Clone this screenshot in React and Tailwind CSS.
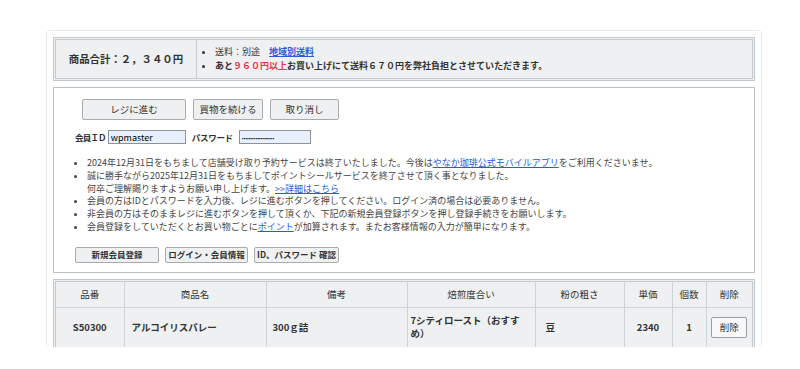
import React from 'react';

const font = { fontFamily: '"Noto Sans CJK JP", "Noto Sans", sans-serif' };

function Btn({ children, className = '' }) {
  return (
    <button
      type="button"
      className={`flex items-center justify-center border border-[#a7abad] bg-[#eef0f1] rounded-[2px] text-[#333] ${className}`}
    >
      {children}
    </button>
  );
}

export default function App() {
  return (
    <div className="w-[800px] h-[369px] bg-white overflow-hidden text-[#333]" style={font}>
      <div className="h-[347px] overflow-hidden pt-[30px] pl-[46px]">
        <div className="w-[716px] h-[340px] border border-[#e9ebec] rounded-[4px] px-[6px] pt-[6px]">
          {/* 合計 */}
          <div className="h-[44px] border-[3px] border-double border-[#c3cacd] bg-[#eef0f1] flex">
            <div className="w-[141px] border-r border-[#c8cfd2] flex items-center justify-center font-bold text-[10.4px]">
              商品合計：２，３４０円
            </div>
            <ul className="flex-1 flex flex-col justify-center pl-[18px] text-[9px] leading-[14px] list-disc">
              <li>
                送料：別途　<a className="text-[#2a5bd7] underline font-bold">地域別送料</a>
              </li>
              <li className="font-bold">
                あと<span className="text-[#f0304a]">９６０円以上</span>お買い上げにて送料６７０円を弊社負担とさせていただきます。
              </li>
            </ul>
          </div>

          {/* ログイン */}
          <div className="mt-[6px] h-[186px] border border-[#b9c0c3] pl-[21px] pt-[11px]">
            <div className="flex gap-[7px] pl-[7px]">
              <Btn className="w-[104px] h-[21px] text-[9.5px]">レジに進む</Btn>
              <Btn className="w-[70px] h-[21px] text-[9.5px]">買物を続ける</Btn>
              <Btn className="w-[69px] h-[21px] text-[9.5px]">取り消し</Btn>
            </div>
            <div className="mt-[10px] flex items-center text-[8.5px] font-bold">
              <span className="tracking-[-0.8px]">会員ＩＤ</span>
              <input
                readOnly
                value="wpmaster"
                className="ml-[2px] w-[78px] h-[14px] bg-[#e8f0fe] border border-[#8d9296] px-[2px] text-[9px] font-normal text-black outline-none"
              />
              <span className="ml-[6px] tracking-[-0.3px]">パスワード</span>
              <input
                readOnly
                type="password"
                value="wpmaster12345678901"
                className="ml-[6px] w-[72px] h-[14px] bg-[#e8f0fe] border border-[#8d9296] px-[2px] text-[5px] font-normal text-black outline-none"
              />
            </div>
            <ul className="mt-[13px] list-disc pl-[12px] text-[9px] leading-[12.8px] text-[#444]">
              <li>
                2024年12月31日をもちまして店舗受け取り予約サービスは終了いたしました。今後は
                <a className="text-[#2a5bd7] underline">やなか珈琲公式モバイルアプリ</a>をご利用くださいませ。
              </li>
              <li>
                誠に勝手ながら2025年12月31日をもちましてポイントシールサービスを終了させて頂く事となりました。
                <br />
                何卒ご理解賜りますようお願い申し上げます。<a className="text-[#2a5bd7] underline">&gt;&gt;詳細はこちら</a>
              </li>
              <li>会員の方はIDとパスワードを入力後、レジに進むボタンを押してください。ログイン済の場合は必要ありません。</li>
              <li>非会員の方はそのままレジに進むボタンを押して頂くか、下記の新規会員登録ボタンを押し登録手続きをお願いします。</li>
              <li>
                会員登録をしていただくとお買い物ごとに<a className="text-[#2a5bd7] underline">ポイント</a>が加算されます。またお客様情報の入力が簡単になります。
              </li>
            </ul>
            <div className="mt-[13px] flex gap-[6px]">
              <Btn className="w-[84px] h-[16px] text-[8.5px] font-bold">新規会員登録</Btn>
              <Btn className="w-[83px] h-[16px] text-[8.5px] font-bold">ログイン・会員情報</Btn>
              <Btn className="w-[85px] h-[16px] text-[8.5px] font-bold">ID、パスワード 確認</Btn>
            </div>
          </div>

          {/* カート */}
          <div className="mt-[6px] border-[3px] border-double border-[#c3cacd] bg-[#eef0f1]">
            <table className="w-full table-fixed border-collapse text-[9.5px]">
              <colgroup>
                <col className="w-[68px]" />
                <col className="w-[142px]" />
                <col className="w-[141px]" />
                <col className="w-[128px]" />
                <col className="w-[89px]" />
                <col className="w-[48px]" />
                <col className="w-[34px]" />
                <col />
              </colgroup>
              <thead>
                <tr className="h-[25px] text-center">
                  {['品番', '商品名', '備考', '焙煎度合い', '粉の粗さ', '単価', '個数', '削除'].map((h, i) => (
                    <th
                      key={h}
                      className={`font-normal border-b border-[#cdd4d7] ${i < 7 ? 'border-r' : ''}`}
                    >
                      {h}
                    </th>
                  ))}
                </tr>
              </thead>
              <tbody>
                <tr className="h-[40px] font-bold">
                  <td className="text-center border-r border-[#cdd4d7]">S50300</td>
                  <td className="pl-[7px] border-r border-[#cdd4d7]">アルコイリスパレー</td>
                  <td className="pl-[6px] border-r border-[#cdd4d7]">300ｇ詰</td>
                  <td className="pl-[3px] pr-[6px] leading-[13px] border-r border-[#cdd4d7]">7シティロースト（おすすめ）</td>
                  <td className="pl-[10px] border-r border-[#cdd4d7]">豆</td>
                  <td className="text-center border-r border-[#cdd4d7]">2340</td>
                  <td className="text-center border-r border-[#cdd4d7]">1</td>
                  <td className="text-center">
                    <button
                      type="button"
                      className="w-[36px] h-[21px] mx-auto border border-[#9a9ea0] bg-[#f8f8f8] rounded-[2px] text-[9.5px] font-normal"
                    >
                      削除
                    </button>
                  </td>
                </tr>
              </tbody>
            </table>
          </div>
        </div>
      </div>
    </div>
  );
}
